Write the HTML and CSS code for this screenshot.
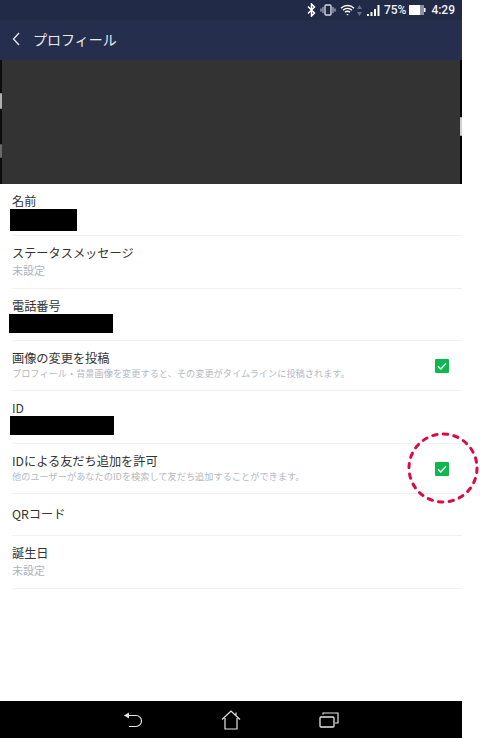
FILE: index.html
```html
<!DOCTYPE html>
<html lang="ja">
<head>
  <meta charset="UTF-8">
  <meta name="viewport" content="width=device-width, initial-scale=1.0">
  <title>プロフィール</title>
  <link rel="stylesheet" href="styles.css">
</head>
<body>
  <div class="app">
    <!-- Status bar -->
    <div class="status-bar">
      <svg class="st-icon" width="9" height="14" viewBox="0 0 9 14"><path d="M1 3.500l6.500 6.500-3 3V1l3 3L1 10.500" fill="none" stroke="#fff" stroke-width="1.500"/></svg>
      <svg class="st-icon st-vibrate" width="16" height="12" viewBox="0 0 16 12"><rect x="5" y="1" width="6" height="10" rx="1" fill="none" stroke="#d5d8e0" stroke-width="1.400"/><path d="M3 3v6M13 3v6M1 4.500v3M15 4.500v3" stroke="#aab0bd" stroke-width="1.300"/></svg>
      <svg class="st-icon" width="15" height="12" viewBox="0 0 15 12"><path d="M1 4.200a9.200 9.200 0 0 1 13 0M3 6.300a6.400 6.400 0 0 1 9 0M5 8.300a3.500 3.500 0 0 1 5 0" fill="none" stroke="#fff" stroke-width="1.300"/><path d="M6.300 10l1.200 1.500L8.700 10z" fill="#fff"/></svg>
      <svg class="st-icon st-updown" width="5" height="11" viewBox="0 0 5 11"><path d="M2.500 0L5 4H0zM2.500 11L0 7h5z" fill="#69728a"/></svg>
      <svg class="st-icon st-signal" width="13" height="11" viewBox="0 0 13 11"><path d="M0 9h2v2H0zM3.500 7h2v4h-2zM7 4h2v7H7zM10.500 0h2v11h-2z" fill="#fff"/></svg>
      <span class="st-text">75%</span>
      <svg class="st-icon st-battery" width="17" height="10" viewBox="0 0 17 10"><rect width="11" height="10" fill="#fff"/><rect x="11" width="4" height="10" fill="#8b90a0"/><rect x="15" y="3" width="1.500" height="4" fill="#fff"/></svg>
      <span class="st-text st-time">4:29</span>
    </div>

    <!-- Header -->
    <header class="title-bar">
      <svg class="back" width="8" height="14" viewBox="0 0 8 14"><path d="M7 1L1.500 7 7 13" fill="none" stroke="#e8eaf0" stroke-width="1.300"/></svg>
      <h1>プロフィール</h1>
    </header>

    <!-- Cover -->
    <div class="cover">
      <span class="blob blob-left-a"></span>
      <span class="blob blob-left-b"></span>
      <span class="blob blob-right"></span>
    </div>

    <!-- Rows -->
    <main class="list">
      <div class="row row-name">
        <div class="row-body">
          <p class="label">名前</p>
          <div class="redact redact-name"></div>
        </div>
      </div>
      <div class="row row-status">
        <div class="row-body">
          <p class="label">ステータスメッセージ</p>
          <p class="value">未設定</p>
        </div>
      </div>
      <div class="row row-phone">
        <div class="row-body">
          <p class="label">電話番号</p>
          <div class="redact redact-phone"></div>
        </div>
      </div>
      <div class="row row-post">
        <div class="row-body">
          <p class="label">画像の変更を投稿</p>
          <p class="note">プロフィール・背景画像を変更すると、その変更がタイムラインに投稿されます。</p>
        </div>
        <span class="check"><svg width="14" height="14" viewBox="0 0 14 14"><rect width="14" height="14" rx="1" fill="#0fb84f"/><path d="M3 7.200l2.800 2.800L11 4.300" fill="none" stroke="#fff" stroke-width="1.300"/></svg></span>
      </div>
      <div class="row row-id">
        <div class="row-body">
          <p class="label">ID</p>
          <div class="redact redact-id"></div>
        </div>
      </div>
      <div class="row row-allow">
        <div class="row-body">
          <p class="label">IDによる友だち追加を許可</p>
          <p class="note">他のユーザーがあなたのIDを検索して友だち追加することができます。</p>
        </div>
        <span class="check"><svg width="14" height="14" viewBox="0 0 14 14"><rect width="14" height="14" rx="1" fill="#0fb84f"/><path d="M3 7.200l2.800 2.800L11 4.300" fill="none" stroke="#fff" stroke-width="1.300"/></svg></span>
        <svg class="ring" width="76" height="76" viewBox="0 0 76 76"><circle cx="38" cy="38" r="34" fill="none" stroke="#dc0a41" stroke-width="3" stroke-linecap="round" stroke-dasharray="4.500 6.180"/></svg>
      </div>
      <div class="row row-qr">
        <div class="row-body">
          <p class="label">QRコード</p>
        </div>
      </div>
      <div class="row row-birth">
        <div class="row-body">
          <p class="label">誕生日</p>
          <p class="value">未設定</p>
        </div>
      </div>
    </main>

    <!-- Nav bar -->
    <nav class="nav-bar">
      <svg class="nav-back" width="20" height="16" viewBox="0 0 20 16"><path d="M1.500 3.500H13a5 5 0 0 1 0 11H6" fill="none" stroke="#e6e6e6" stroke-width="1.200"/><path d="M6 .5L1 3.500l5 3z" fill="#e6e6e6"/></svg>
      <svg class="nav-home" width="20" height="20" viewBox="0 0 20 20"><path d="M1 9.500L10 1l9 8.500M4 8v11h12V8M15 2.500v3" fill="none" stroke="#e6e6e6" stroke-width="1.200"/></svg>
      <svg class="nav-recent" width="20" height="16" viewBox="0 0 20 16"><rect x="1" y="5" width="14" height="10" rx="1" fill="none" stroke="#e6e6e6" stroke-width="1.300"/><path d="M4 2.500V1h15v10h-3" fill="none" stroke="#e6e6e6" stroke-width="1.200"/></svg>
    </nav>
  </div>
</body>
</html>
```

FILE: styles.css
```css
/* Global Styles */
html,
body {
  margin: 0;
  padding: 0;
  height: 100%;
  background-color: #fff;
}
body {
  font-family: "Noto Sans CJK JP", "Noto Sans", sans-serif;
  color: #333;
  overflow: hidden;
}
p,
h1 {
  margin: 0;
}
.app {
  width: 462px;
  height: 738px;
  display: flex;
  flex-direction: column;
}

/* Status bar */
.status-bar {
  height: 20px;
  display: flex;
  align-items: center;
  justify-content: flex-end;
  gap: 4px;
  padding-right: 7px;
  background-color: #212a46;
}
.st-text {
  font-family: Roboto, sans-serif;
  font-size: 12px;
  font-weight: 500;
  color: #f2f3f6;
}
.st-time {
  margin-left: 1px;
}
.st-updown {
  margin-left: -2px;
}
.st-signal {
  margin-left: 1px;
}
.st-battery {
  margin-left: -1px;
}

/* Header */
.title-bar {
  height: 40px;
  box-sizing: border-box;
  display: flex;
  align-items: center;
  gap: 13px;
  padding: 0 0 2px 12px;
  background-color: #252f4d;
}
.title-bar h1 {
  font-size: 14px;
  font-weight: 400;
  color: #e8eaf0;
}

/* Cover */
.cover {
  height: 124px;
  position: relative;
  background-color: #333;
  border-left: 2px solid #0c0c0c;
  border-right: 2px solid #000;
  box-sizing: border-box;
}
.blob {
  position: absolute;
  width: 2px;
  border-radius: 1px;
  filter: blur(0.6px);
}
.blob-left-a {
  left: -2px;
  top: 33px;
  height: 16px;
  background-color: #b0b0b0;
}
.blob-left-b {
  left: -2px;
  top: 84px;
  height: 14px;
  background-color: #6a6a6a;
}
.blob-right {
  right: -2px;
  top: 57px;
  height: 19px;
  background-color: #d0d0d0;
}

/* Rows */
.list {
  flex: 1;
  padding-left: 12px;
}
.row {
  position: relative;
  display: flex;
  align-items: center;
  justify-content: space-between;
  box-sizing: border-box;
  border-bottom: 1px solid #f1f1f3;
}
.row-body {
  align-self: flex-start;
}
.label {
  font-size: 12.2px;
  line-height: 16px;
  color: #333;
}
.value {
  font-size: 11px;
  line-height: 16px;
  margin-top: 1px;
  color: #aeb3bd;
}
.note {
  font-size: 9.2px;
  line-height: 13px;
  margin-top: 1px;
  color: #b4b8c2;
}
.redact {
  background-color: #000;
}
.redact-name {
  width: 67px;
  height: 22px;
  margin-left: -2px;
}
.redact-phone {
  width: 104px;
  height: 19px;
  margin-left: -3px;
}
.redact-id {
  width: 104px;
  height: 19px;
  margin-left: -2px;
}
.row-name {
  height: 52px;
  padding-top: 9px;
}
.row-status {
  height: 53px;
  padding-top: 9px;
}
.row-phone {
  height: 52px;
  padding-top: 9px;
}
.row-post {
  height: 50px;
  padding-top: 9px;
}
.row-id {
  height: 53px;
  padding-top: 9px;
}
.row-allow {
  height: 50px;
  padding-top: 9px;
}
.row-qr {
  height: 42px;
  padding-top: 12px;
}
.row-birth {
  height: 53px;
  padding-top: 9px;
}
.check {
  display: flex;
  margin-right: 13px;
  margin-top: -9px;
}

/* Red dashed marker over the checkbox */
.ring {
  position: absolute;
  right: -19px;
  top: -14px;
}

/* Nav bar */
.nav-bar {
  height: 37px;
  position: relative;
  background-color: #000;
  display: flex;
  align-items: center;
  padding-left: 123px;
}
.nav-home {
  margin-left: 78px;
}
.nav-recent {
  margin-left: 78px;
}
```
